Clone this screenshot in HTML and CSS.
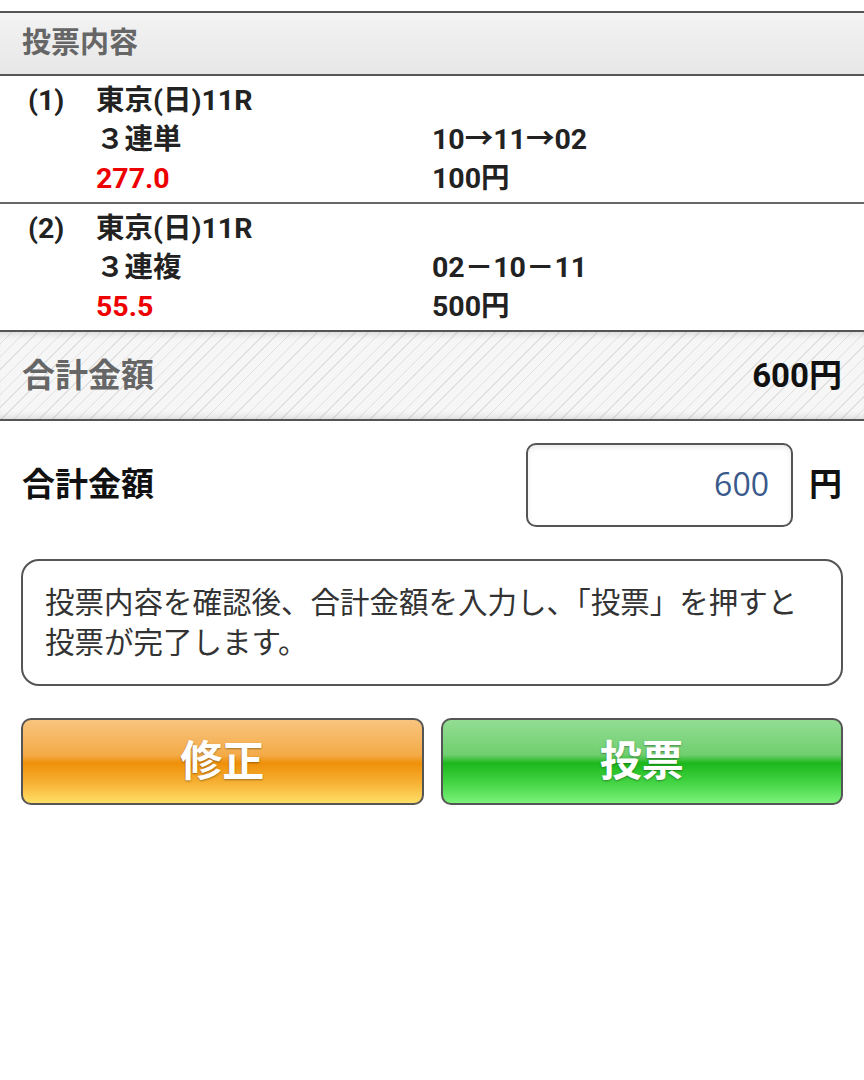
FILE: index.html
```html
<!DOCTYPE html>
<html lang="ja">
<head>
  <meta charset="UTF-8">
  <meta name="viewport" content="width=device-width, initial-scale=1.0">
  <title>投票内容確認</title>
  <link rel="stylesheet" href="styles.css">
</head>
<body>
  <div class="page">
    <h2 class="section-head">投票内容</h2>

    <ul class="bet-list">
      <li class="bet">
        <span class="bet-no">(1)</span>
        <span class="bet-race">東京(日)11R</span>
        <span></span>
        <span></span>
        <span>３連単</span>
        <span>10→11→02</span>
        <span></span>
        <span class="odds">277.0</span>
        <span>100円</span>
      </li>
      <li class="bet">
        <span class="bet-no">(2)</span>
        <span class="bet-race">東京(日)11R</span>
        <span></span>
        <span></span>
        <span>３連複</span>
        <span>02－10－11</span>
        <span></span>
        <span class="odds">55.5</span>
        <span>500円</span>
      </li>
    </ul>

    <div class="total-band">
      <span class="total-label">合計金額</span>
      <span class="total-value">600円</span>
    </div>

    <div class="amount-row">
      <label class="amount-label" for="amount">合計金額</label>
      <div class="amount-field">
        <input id="amount" class="amount-input" type="text" value="600">
        <span class="amount-unit">円</span>
      </div>
    </div>

    <div class="notice">
      投票内容を確認後、合計金額を入力し、「投票」を押すと投票が完了します。
    </div>

    <div class="actions">
      <button class="btn btn-fix">修正</button>
      <button class="btn btn-vote">投票</button>
    </div>
  </div>
</body>
</html>
```

FILE: styles.css
```css
* {
  margin: 0;
  padding: 0;
  box-sizing: border-box;
}

body {
  font-family: Roboto, "Noto Sans CJK JP", sans-serif;
  color: #222;
  background: #fff;
}

.page {
  padding-top: 11px;
}

.section-head {
  height: 65px;
  padding-left: 22px;
  border-top: 2px solid #555;
  border-bottom: 2px solid #555;
  background: linear-gradient(#f3f3f3, #e7e7e7);
  font-size: 29px;
  font-weight: bold;
  line-height: 61px;
  color: #666;
}

.bet-list {
  list-style: none;
}

.bet {
  display: grid;
  grid-template-columns: 68px 336px 1fr;
  padding: 5px 0 4px 28px;
  border-bottom: 2px solid #666;
  font-size: 28.5px;
  font-weight: bold;
  line-height: 39px;
}

.bet:last-child {
  border-bottom: none;
}

.odds {
  color: #ee0000;
}

.total-band {
  display: flex;
  justify-content: space-between;
  align-items: center;
  height: 91px;
  padding: 0 22px 6px;
  border-top: 2px solid #555;
  border-bottom: 2px solid #555;
  background-color: #f6f6f6;
  background-image: repeating-linear-gradient(135deg, #f6f6f6 0, #f6f6f6 8px, #e0e0e0 8px, #e0e0e0 9px);
  box-shadow: inset 0 7px 7px -5px rgba(0, 0, 0, 0.12), inset 0 -7px 7px -5px rgba(0, 0, 0, 0.12);
}

.total-label {
  font-size: 33px;
  font-weight: bold;
  color: #666;
}

.total-value {
  font-size: 33px;
  font-weight: bold;
  color: #111;
}

.amount-row {
  display: flex;
  justify-content: space-between;
  align-items: center;
  padding: 22px 22px 0;
}

.amount-label {
  font-size: 33px;
  font-weight: bold;
  color: #111;
  padding-bottom: 6px;
}

.amount-field {
  display: flex;
  align-items: center;
  gap: 16px;
}

.amount-input {
  width: 267px;
  height: 84px;
  padding: 0 22px 4px;
  border: 2px solid #555;
  border-radius: 10px;
  box-shadow: inset 0 3px 5px rgba(0, 0, 0, 0.08);
  font-family: "Open Sans", sans-serif;
  font-size: 32px;
  color: #3b5a8c;
  text-align: right;
  outline: none;
}

.amount-unit {
  font-size: 33px;
  font-weight: bold;
  color: #111;
  padding-bottom: 6px;
}

.notice {
  margin: 32px 21px 0;
  padding: 19px 40px 24px 22px;
  border: 2px solid #555;
  border-radius: 18px;
  font-family: "Noto Sans CJK JP", sans-serif;
  font-size: 29.5px;
  line-height: 40px;
  color: #333;
}

.actions {
  display: grid;
  grid-template-columns: 1fr 1fr;
  gap: 17px;
  padding: 32px 21px 0;
}

.btn {
  height: 87px;
  padding-bottom: 8px;
  border: 2px solid #555;
  border-radius: 10px;
  font-family: "Noto Sans CJK JP", sans-serif;
  font-size: 42px;
  font-weight: bold;
  color: #fff;
  text-shadow: 0 1px 2px rgba(0, 0, 0, 0.35);
}

.btn-fix {
  background: linear-gradient(#f8c47e 0%, #f4ab48 42%, #ef9009 52%, #f6b033 75%, #ffdf66 100%);
}

.btn-vote {
  background: linear-gradient(#93dd93 0%, #6fcf6f 42%, #1bb81b 52%, #43d443 75%, #7af27a 100%);
}
```
